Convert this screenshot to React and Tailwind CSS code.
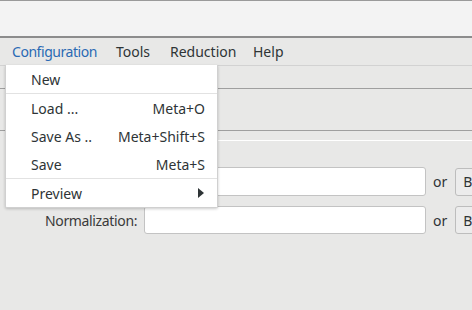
import { useState } from 'react';

const items = [
  { label: 'New', shortcut: '' },
  { label: 'Load ...', shortcut: 'Meta+O', sep: true },
  { label: 'Save As ..', shortcut: 'Meta+Shift+S' },
  { label: 'Save', shortcut: 'Meta+S' },
  { label: 'Preview', submenu: true, sep: true }
];

const App = () => {
  const [open] = useState(true);

  return (
    <div className="relative h-[310px] w-[472px] overflow-hidden bg-[#e8e8e7] font-['Noto_Sans',sans-serif] text-[14px] text-[#2e3436]">
      {/* Title bar */}
      <div className="h-[38px] border-t border-b-2 border-t-[#9a9a9a] border-b-[#8c8c8c] bg-[#f3f3f3]" />

      {/* Menu bar */}
      <div className="flex h-[28px] items-center border-b border-[#d2d2d2] bg-[#e8e8e7] pb-[1px]">
        <span className="ml-[12px] w-[104px] tracking-[-0.45px] text-[#2a6ab4]">Configuration</span>
        <span className="w-[54px]">Tools</span>
        <span className="w-[83px]">Reduction</span>
        <span>Help</span>
      </div>

      {/* Tab strip */}
      <div className="h-[23px] border-b border-[#9f9f9f]" />
      <div className="h-[42px] border-b border-[#9f9f9f]" />

      {/* Body */}
      <div className="flex h-[180px]">
        <div className="ml-[8px] w-[1px] bg-[#b4b4b4]" />
        <div className="ml-[18px] mt-[9px] w-[1px] bg-white" />
        <div className="flex-1">
          <div className="h-[10px] border-b border-white" />
          <div className="flex flex-col gap-[10px] pt-[26px]">
            <div className="flex h-[29px] items-center">
              <div className="ml-[182px] h-[29px] w-[218px] rounded-[3px] border border-[#c3c3c3] bg-white" />
              <span className="ml-[7px]">or</span>
              <button className="ml-[8px] h-[28px] w-[40px] rounded-[3px] border border-[#bdbdbd] bg-[#ececec] pl-[7px] text-left">Browse</button>
            </div>
            <div className="flex h-[28px] items-center">
              <span className="ml-[19px] w-[99px] whitespace-nowrap tracking-[-0.35px] text-[#3a3a3a]">Normalization:</span>
              <div className="h-[28px] w-[282px] rounded-[3px] border border-[#c3c3c3] bg-white" />
              <span className="ml-[7px]">or</span>
              <button className="ml-[8px] h-[28px] w-[40px] rounded-[3px] border border-[#bdbdbd] bg-[#ececec] pl-[7px] text-left">Browse</button>
            </div>
          </div>
        </div>
      </div>

      {/* Dropdown menu */}
      {open && (
        <div className="absolute left-[5px] top-[65px] w-[213px] rounded-b-[2px] border border-t-0 border-[#d0d0d0] bg-white shadow-[0_1px_3px_rgba(0,0,0,0.2)]">
          {items.map((item, i) => (
            <div
              key={i}
              className={
                item.sep
                  ? 'flex h-[29px] items-center border-t border-[#e2e2e2] pl-[25px] pr-[12px]'
                  : 'flex h-[28px] items-center pl-[25px] pr-[12px]'
              }
            >
              <span className="flex-1">{item.label}</span>
              {item.shortcut && <span>{item.shortcut}</span>}
              {item.submenu && (
                <svg width="6" height="10" viewBox="0 0 6 10" className="mr-[1px]">
                  <path d="M0 0 L6 5 L0 10 Z" fill="#2e3436" />
                </svg>
              )}
            </div>
          ))}
        </div>
      )}
    </div>
  );
};

export default App;
